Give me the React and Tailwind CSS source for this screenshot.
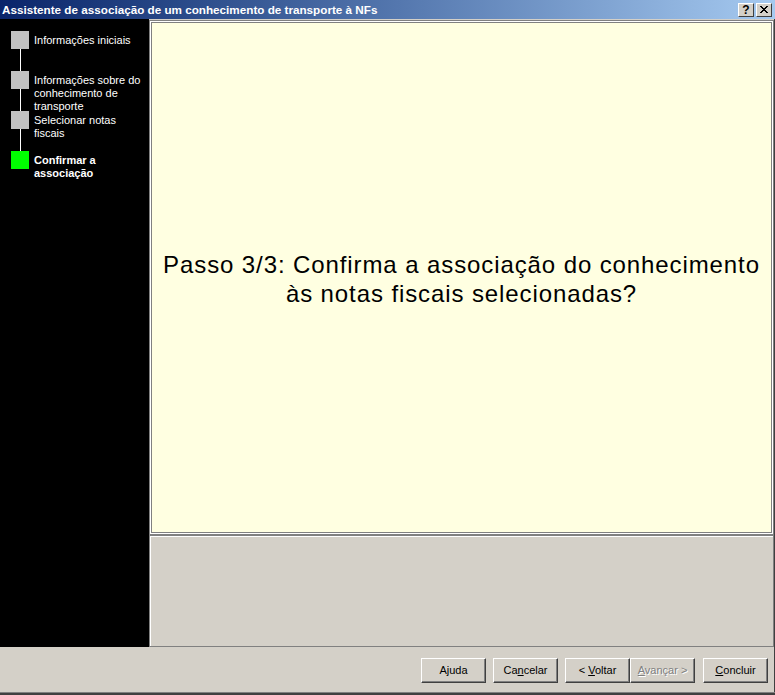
import React from "react";

const steps = [
  { lines: ["Informações iniciais"], done: true },
  { lines: ["Informações sobre do", "conhecimento de", "transporte"], done: true },
  { lines: ["Selecionar notas", "fiscais"], done: true },
  { lines: ["Confirmar a", "associação"], current: true },
];

const WinButton = ({ children, disabled, className = "" }) => (
  <button
    type="button"
    disabled={disabled}
    className={
      "h-[25px] w-[65px] bg-[#d4d0c8] border border-t-white border-l-white border-b-[#404040] border-r-[#404040] shadow-[inset_-1px_-1px_0_#808080] text-[11px] leading-none " +
      (disabled ? "text-[#808080] [text-shadow:1px_1px_0_#ffffff] " : "text-black ") +
      className
    }
  >
    {children}
  </button>
);

const Step = ({ step, last }) => (
  <div className="flex h-[40px]">
    <div className="flex w-[18px] flex-col items-center">
      <div
        className={
          "h-[18px] w-[18px] shrink-0 " +
          (step.current ? "bg-[#00ff00]" : "bg-[#c0c0c0]")
        }
      />
      {!last && <div className="w-px flex-1 bg-white" />}
    </div>
    <div
      className={
        "ml-[5px] pt-[3px] text-[11px] leading-[13px] text-white " +
        (step.current ? "font-bold" : "")
      }
    >
      {step.lines.map((l) => (
        <div key={l}>{l}</div>
      ))}
    </div>
  </div>
);

export default function App() {
  return (
    <div className="flex h-[695px] w-[775px] flex-col overflow-hidden bg-[#d4d0c8] font-['Liberation_Sans',Arial,sans-serif]">
      {/* title bar */}
      <div className="flex h-[19px] shrink-0 items-center bg-gradient-to-r from-[#0a246a] to-[#a6caf0] pl-[2px] pr-[3px]">
        <div className="flex-1 text-[11.7px] font-bold leading-none text-white">
          Assistente de associação de um conhecimento de transporte à NFs
        </div>
        <div className="flex gap-[2px]">
          <div className="flex h-[14px] w-[16px] items-center justify-center border border-t-white border-l-white border-b-[#404040] border-r-[#404040] bg-[#d4d0c8] text-[12px] font-bold leading-none text-black">
            ?
          </div>
          <div className="flex h-[14px] w-[16px] items-center justify-center border border-t-white border-l-white border-b-[#404040] border-r-[#404040] bg-[#d4d0c8]">
            <svg width="8" height="7" viewBox="0 0 8 7">
              <path d="M0 0h2v1H0zM6 0h2v1H6zM1 1h2v1H1zM5 1h2v1H5zM2 2h4v1H2zM3 3h2v1H3zM2 4h4v1H2zM1 5h2v1H1zM5 5h2v1H5zM0 6h2v1H0zM6 6h2v1H6z" fill="#000" />
            </svg>
          </div>
        </div>
      </div>

      {/* main area */}
      <div className="flex h-[628px] shrink-0">
        <div className="w-[149px] shrink-0 bg-black pl-[11px] pt-[12px]">
          {steps.map((s, i) => (
            <Step key={i} step={s} last={i === steps.length - 1} />
          ))}
        </div>
        <div className="flex flex-1 flex-col pt-px">
          <div className="h-[515px] border border-[#808080] bg-white p-px">
            <div className="flex h-full items-center justify-center border border-[#808080] bg-[#ffffe1] pt-[3px]">
              <div className="text-center text-[24px] leading-[29px] tracking-[0.9px] text-black">
                Passo 3/3: Confirma a associação do conhecimento
                <br />
                às notas fiscais selecionadas?
              </div>
            </div>
          </div>
          <div className="flex-1 border border-[#808080] bg-white pl-px pt-px">
            <div className="h-full bg-[#d4d0c8]" />
          </div>
        </div>
        <div className="w-px shrink-0 bg-[#404040]" />
      </div>

      {/* buttons */}
      <div className="flex h-[45px] shrink-0 items-start justify-end border-r border-[#404040] pr-[6px] pt-[11px]">
        <WinButton>
          A<span className="underline">j</span>uda
        </WinButton>
        <WinButton className="ml-[7px]">
          Ca<span className="underline">n</span>celar
        </WinButton>
        <WinButton className="ml-[7px]">
          &lt; <span className="underline">V</span>oltar
        </WinButton>
        <WinButton disabled>
          <span className="underline">A</span>vançar &gt;
        </WinButton>
        <WinButton className="ml-[8px]">
          <span className="underline">C</span>oncluir
        </WinButton>
      </div>
      <div className="h-px shrink-0 bg-[#808080]" />
      <div className="flex-1 bg-[#404040]" />
    </div>
  );
}
